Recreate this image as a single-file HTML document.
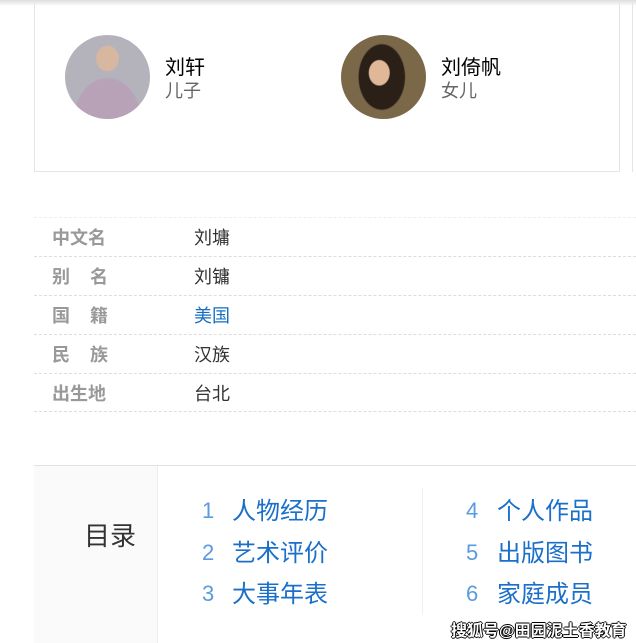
<!DOCTYPE html>
<html><head><meta charset="utf-8"><style>
body{margin:0;width:636px;height:643px;overflow:hidden;background:#fff;position:relative;font-family:"Liberation Sans","Noto Sans CJK SC",sans-serif}
.a{position:absolute;white-space:nowrap}
.shadow{left:0;top:0;width:636px;height:6px;background:linear-gradient(#ddd,#fff)}
.card{left:34px;top:-2px;width:584px;height:173px;border:1px solid #e5e5e5;border-top:none}
.av{width:85px;height:84px;border-radius:50%;top:35px}
.nm{font-size:20px;color:#000;top:51px}
.rl{font-size:18px;color:#666;top:77px}
.row{left:34px;width:602px;height:38px;border-bottom:1px dashed #ddd}
.lb{left:52px;font-size:18px;font-weight:bold;color:#999}
.vl{left:194px;font-size:18px;color:#333}
.num{font-size:22px;color:#5a9be0}
.it{font-size:24px;color:#1a6fca}
</style></head><body>
<div class="a shadow"></div>
<div class="a card"></div>
<div class="a" style="left:632px;top:0;width:1px;height:172px;background:#e5e5e5"></div>
<div class="a av" style="left:65px;background:radial-gradient(ellipse 14% 16% at 50% 28%,#d8b7a0 0 90%,transparent 100%),radial-gradient(ellipse 40% 50% at 50% 100%,#b8a2b8 0 95%,transparent 100%),#b4b3bc"></div>
<div class="a av" style="left:341px;background:radial-gradient(ellipse 13% 16% at 45% 45%,#e0b898 0 90%,transparent 100%),radial-gradient(ellipse 28% 40% at 48% 50%,#2a2018 0 95%,transparent 100%),#7a6848"></div>
<div class="a nm" style="left:165px">刘轩</div>
<div class="a rl" style="left:165px">儿子</div>
<div class="a nm" style="left:441px">刘倚帆</div>
<div class="a rl" style="left:441px">女儿</div>
<div class="a" style="left:34px;top:217px;width:602px;border-top:1px dashed #eee"></div>
<div class="a row" style="top:218px"></div>
<div class="a row" style="top:257px"></div>
<div class="a row" style="top:296px"></div>
<div class="a row" style="top:335px"></div>
<div class="a row" style="top:373px"></div>
<div class="a lb" style="top:224px">中文名</div><div class="a vl" style="top:224px">刘墉</div>
<div class="a lb" style="top:263px">别&nbsp;&nbsp;&nbsp;&nbsp;名</div><div class="a vl" style="top:263px">刘镛</div>
<div class="a lb" style="top:302px">国&nbsp;&nbsp;&nbsp;&nbsp;籍</div><div class="a vl" style="top:302px;color:#136ec2">美国</div>
<div class="a lb" style="top:341px">民&nbsp;&nbsp;&nbsp;&nbsp;族</div><div class="a vl" style="top:341px">汉族</div>
<div class="a lb" style="top:380px">出生地</div><div class="a vl" style="top:380px">台北</div>
<div class="a" style="left:34px;top:465px;width:602px;height:1px;background:#e2e2e2"></div>
<div class="a" style="left:34px;top:466px;width:123px;height:177px;background:#fafafa;border-right:1px solid #eee"></div>
<div class="a" style="left:84px;top:516px;font-size:26px;color:#333">目录</div>
<div class="a" style="left:422px;top:488px;width:1px;height:127px;background:#eee"></div>
<div class="a num" style="left:202px;top:498px">1</div><div class="a it" style="left:232px;top:491px">人物经历</div>
<div class="a num" style="left:202px;top:540px">2</div><div class="a it" style="left:232px;top:533px">艺术评价</div>
<div class="a num" style="left:202px;top:581px">3</div><div class="a it" style="left:232px;top:574px">大事年表</div>
<div class="a num" style="left:466px;top:498px">4</div><div class="a it" style="left:497px;top:491px">个人作品</div>
<div class="a num" style="left:466px;top:540px">5</div><div class="a it" style="left:497px;top:533px">出版图书</div>
<div class="a num" style="left:466px;top:581px">6</div><div class="a it" style="left:497px;top:574px">家庭成员</div>
<div class="a" style="left:451px;top:617px;font-size:16px;font-weight:bold;color:#fff;text-shadow:-1px 0 #000,1px 0 #000,0 -1px #000,0 1px #000">搜狐号@田园泥土香教育</div>
</body></html>
